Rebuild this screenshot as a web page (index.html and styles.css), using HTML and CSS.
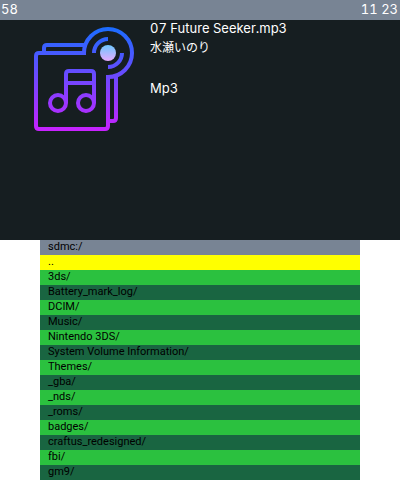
FILE: index.html
```
<!DOCTYPE html>
<html lang="en">
<head>
<meta charset="utf-8">
<meta name="viewport" content="width=device-width, initial-scale=1">
<title>Music player</title>
<link rel="stylesheet" href="styles.css">
</head>
<body>
<section class="player">
  <header class="status"><span>58</span><span>11 23</span></header>
  <div class="now-playing">
    <svg class="cover" viewBox="0 0 104 104" aria-hidden="true">
      <defs>
        <linearGradient id="line" gradientUnits="userSpaceOnUse" x1="0" y1="0" x2="0" y2="104">
          <stop offset="0" stop-color="#1a6dff"/>
          <stop offset="1" stop-color="#c822ff"/>
        </linearGradient>
        <linearGradient id="disc" x1="0" y1="0" x2="0" y2="1">
          <stop offset="0" stop-color="#6dc7ff"/>
          <stop offset="1" stop-color="#e6abff"/>
        </linearGradient>
      </defs>
      <g fill="none" stroke="url(#line)" stroke-width="4">
        <path d="M52 28V26A24 24 0 1 1 76 50H74"/>
        <path d="M52 26H7Q4 26 4 29V99Q4 102 7 102H73Q76 102 76 99V50"/>
        <path d="M12 26V21Q12 18 15 18H53M84 49V91Q84 94 81 94H76"/>
        <path d="M62 26A14 14 0 0 1 76 12M90 26A14 14 0 0 1 76 40"/>
        <path d="M34 76V47Q34 44 37 44H59Q62 44 62 47V76M34 56H62"/>
        <circle cx="26" cy="76" r="8"/>
        <circle cx="54" cy="76" r="8"/>
      </g>
      <circle cx="76" cy="26" r="8" fill="url(#disc)"/>
    </svg>
    <div class="details">
      <p>07 Future Seeker.mp3</p>
      <p class="artist" lang="ja">水瀬いのり</p>
      <p class="format">Mp3</p>
    </div>
  </div>
</section>
<nav class="browser" aria-label="Files">
  <h1 class="path">sdmc:/</h1>
  <ul class="files">
    <li class="selected"><a href="#">..</a></li>
    <li><a href="#">3ds/</a></li>
    <li><a href="#">Battery_mark_log/</a></li>
    <li><a href="#">DCIM/</a></li>
    <li><a href="#">Music/</a></li>
    <li><a href="#">Nintendo 3DS/</a></li>
    <li><a href="#">System Volume Information/</a></li>
    <li><a href="#">Themes/</a></li>
    <li><a href="#">_gba/</a></li>
    <li><a href="#">_nds/</a></li>
    <li><a href="#">_roms/</a></li>
    <li><a href="#">badges/</a></li>
    <li><a href="#">craftus_redesigned/</a></li>
    <li><a href="#">fbi/</a></li>
    <li><a href="#">gm9/</a></li>
  </ul>
</nav>
</body>
</html>
```
FILE: styles.css
```
* {
  box-sizing: border-box;
}

body {
  margin: 0;
  background: #fff;
  font-family: Inter, "Noto Sans CJK JP", sans-serif;
}

.player {
  min-height: 50vh;
  background: #161e21;
  color: #fff;
  font-size: 13px;
  line-height: 20px;
  font-variant-numeric: tabular-nums;
}

.status {
  display: flex;
  justify-content: space-between;
  padding: 0 2px 2px 1px;
  line-height: 18px;
  background: #788494;
}

.now-playing {
  display: flex;
  gap: 14px;
  padding-left: 32px;
}

.cover {
  flex: none;
  width: 104px;
  height: 104px;
  margin-top: 7px;
}

.details {
  margin-top: -2px;
}

.details p {
  margin: 0;
}

.details .artist {
  font-size: 12px;
}

.details .format {
  margin-top: 20px;
}

.browser {
  margin: 0 10%;
  font-family: Roboto, sans-serif;
}

.path,
.files a {
  margin: 0;
  padding: 0 8px 2px;
  font-size: 11px;
  font-weight: 400;
  line-height: 13px;
}

.path {
  background: #788494;
}

.files {
  margin: 0;
  padding: 0;
  list-style: none;
}

.files a {
  display: block;
  color: #000;
  text-decoration: none;
  background: #196541;
}

.files li:nth-child(even) a {
  background: #2bc13f;
}

.files .selected a {
  background: #ff0;
}
```
